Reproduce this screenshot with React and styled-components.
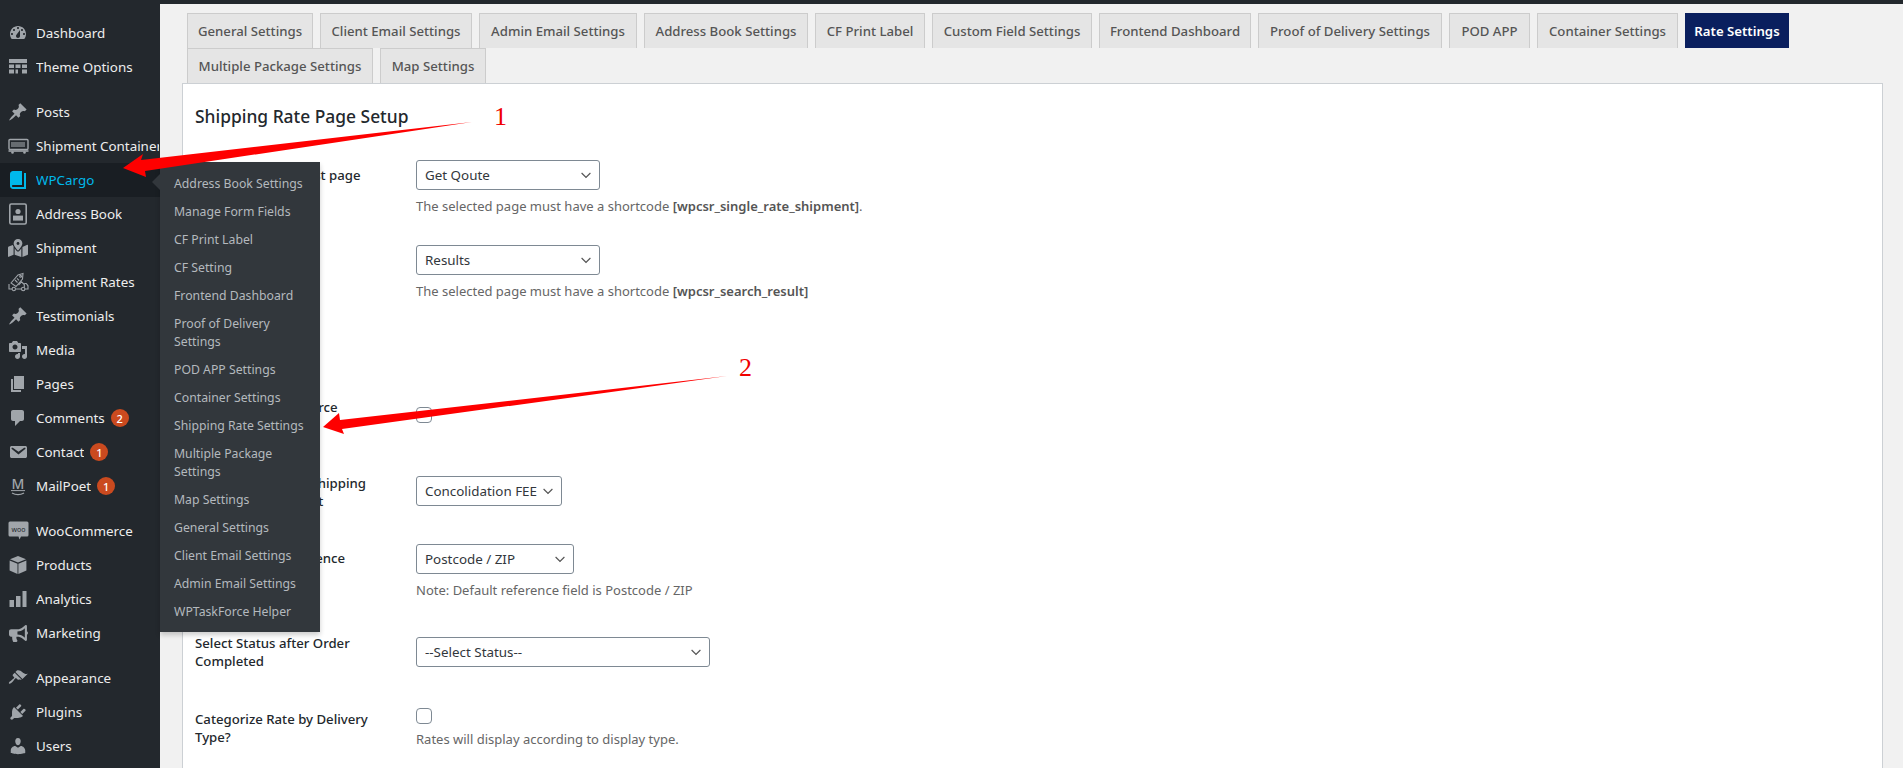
import React from 'react';
import styled, { createGlobalStyle } from 'styled-components';
import { FaMapMarkedAlt, FaBullhorn } from 'react-icons/fa';

const Global = createGlobalStyle`
  html, body { margin: 0; padding: 0; height: 768px; overflow: hidden; background: #f1f1f1; }
  body { font-family: "Noto Sans", "Open Sans", sans-serif; }
`;

const Page = styled.div`
  position: relative;
  width: 1903px;
  height: 768px;
  overflow: hidden;
  display: flex;
  flex-direction: column;
  background: #f1f1f1;
`;
const TopBar = styled.div`
  height: 4px;
  flex: none;
  background: #23282d;
`;
const Body = styled.div`
  flex: 1;
  display: flex;
  min-height: 0;
`;
const Sidebar = styled.nav`
  width: 160px;
  flex: none;
  background: #23282d;
  padding-top: 12px;
  position: relative;
  z-index: 5;
`;
const MenuGroup = styled.div`
  margin-bottom: 11px;
`;
const MenuRow = styled.div`
  position: relative;
  height: 34px;
  display: flex;
  align-items: center;
  background: ${p => (p.$active ? '#191e23' : 'transparent')};
  color: ${p => (p.$active ? '#00b9eb' : '#eeeeee')};
  font-size: 13.4px;
  white-space: nowrap;
`;
const MenuText = styled.span`
  max-width: 123px;
  overflow: hidden;
`;
const IconSlot = styled.span`
  width: 36px;
  flex: none;
  display: flex;
  justify-content: center;
  align-items: center;
  color: ${p => (p.$active ? '#00b9eb' : '#a0a5aa')};
`;
const Badge = styled.span`
  width: 18px;
  height: 18px;
  margin-left: 6px;
  border-radius: 50%;
  background: #ca4a1f;
  color: #fff;
  font-size: 11px;
  font-weight: 500;
  display: flex;
  align-items: center;
  justify-content: center;
`;
const Flyout = styled.div`
  position: absolute;
  left: 160px;
  top: -1px;
  width: 160px;
  background: #32373c;
  padding: 8px 0 6px;
  box-shadow: 0 3px 5px rgba(0, 0, 0, 0.2);
  white-space: normal;
  &::before {
    content: '';
    position: absolute;
    left: -8px;
    top: 12px;
    border: 8px solid transparent;
    border-left: none;
    border-right-color: #32373c;
  }
`;
const FlyoutItem = styled.div`
  padding: 5px 12px 5px 14px;
  font-size: 12.25px;
  line-height: 18px;
  color: #b4b9be;
`;

const Content = styled.main`
  flex: 1;
  min-width: 0;
  padding: 9px 20px 0 22px;
`;
const TabBar = styled.div`
  display: flex;
  flex-wrap: wrap;
  padding-left: 5px;
  column-gap: 7px;
`;
const Tab = styled.div`
  box-sizing: border-box;
  width: ${p => p.$w}px;
  height: 35px;
  border: 1px solid ${p => (p.$active ? '#0a1f5e' : '#cccccc')};
  border-bottom: none;
  background: ${p => (p.$active ? '#0a1f5e' : '#e5e5e5')};
  color: ${p => (p.$active ? '#ffffff' : '#555555')};
  font-size: 13.2px;
  font-weight: ${p => (p.$active ? 600 : 500)};
  line-height: 35px;
  text-align: center;
  white-space: nowrap;
`;
const Panel = styled.section`
  background: #fff;
  border: 1px solid #ccd0d4;
  padding: 20px 12px 0 12px;
  height: 700px;
`;
const Heading = styled.h2`
  margin: 0 0 25px;
  font-size: 17.4px;
  line-height: 24px;
  font-weight: 500;
  color: #23282d;
`;
const Row = styled.div`
  display: grid;
  grid-template-columns: 221px 1fr;
  height: ${p => p.$h}px;
`;
const Label = styled.div`
  padding-top: 13px;
  width: 190px;
  font-size: 13.2px;
  line-height: 18px;
  font-weight: 500;
  color: #23282d;
`;
const Control = styled.div`
  padding-top: ${p => p.$pad}px;
`;
const Select = styled.select`
  display: block;
  box-sizing: border-box;
  width: ${p => p.$w}px;
  height: 30px;
  appearance: none;
  -webkit-appearance: none;
  border: 1px solid #7e8993;
  border-radius: 3px;
  padding: 0 24px 0 8px;
  font-family: inherit;
  font-size: 13.4px;
  color: #32373c;
  background: #fff url('data:image/svg+xml;charset=US-ASCII,%3Csvg%20width%3D%2220%22%20height%3D%2220%22%20xmlns%3D%22http%3A%2F%2Fwww.w3.org%2F2000%2Fsvg%22%3E%3Cpath%20d%3D%22M5%207l5%205%205-5%201%201-6%206-6-6%201-1z%22%20fill%3D%22%23555%22%2F%3E%3C%2Fsvg%3E') no-repeat right 5px top 50%;
  background-size: 16px 16px;
`;
const Check = styled.input`
  display: block;
  box-sizing: border-box;
  width: 16px;
  height: 16px;
  margin: 0;
  appearance: none;
  -webkit-appearance: none;
  background: #fff;
  border: 1px solid #7e8993;
  border-radius: 4px;
`;
const Help = styled.p`
  margin: ${p => p.$top || 7}px 0 0;
  font-size: 13px;
  line-height: 18px;
  color: #666666;
  strong { font-weight: 600; color: #555; }
`;

const Overlay = styled.div`
  position: absolute;
  inset: 0;
  z-index: 20;
  pointer-events: none;
`;
const ArrowSvg = styled.svg`
  position: absolute;
  left: 0;
  top: 0;
  width: 1903px;
  height: 768px;
`;
const Marker = styled.span`
  position: absolute;
  left: ${p => p.$x}px;
  top: ${p => p.$y}px;
  font-family: "Liberation Serif", serif;
  font-size: 26px;
  line-height: 26px;
  color: #f00000;
`;

const Dash = ({ d }) => (
  <svg width="20" height="20" viewBox="0 0 20 20" fill="currentColor"><path d={d} /></svg>
);
const P = {
  dashboard: 'M3.76 16h12.48c1.1-1.37 1.76-3.11 1.76-5 0-4.42-3.58-8-8-8s-8 3.58-8 8c0 1.89.66 3.63 1.76 5zM10 4c.55 0 1 .45 1 1s-.45 1-1 1-1-.45-1-1 .45-1 1-1zM6 6c.55 0 1 .45 1 1s-.45 1-1 1-1-.45-1-1 .45-1 1-1zm8 0c.55 0 1 .45 1 1s-.45 1-1 1-1-.45-1-1 .45-1 1-1zm-5.37 5.55L12 7v6c0 1.1-.9 2-2 2s-2-.9-2-2c0-.57.24-1.08.63-1.45zM4 10c.55 0 1 .45 1 1s-.45 1-1 1-1-.45-1-1 .45-1 1-1zm12 0c.55 0 1 .45 1 1s-.45 1-1 1-1-.45-1-1 .45-1 1-1z',
  pin: 'M10.44 3.02l1.82-1.82 6.36 6.35-1.83 1.82c-1.05-.68-2.48-.57-3.41.36l-.75.75c-.92.93-1.04 2.35-.35 3.41l-1.83 1.82-2.41-2.41-2.8 2.79c-.42.42-3.38 2.71-3.8 2.29s1.86-3.39 2.28-3.81l2.79-2.79L4.1 9.36l1.83-1.82c1.05.69 2.48.57 3.4-.36l.75-.75c.93-.92 1.05-2.35.36-3.41z',
  media: 'M13 11V4c0-.55-.45-1-1-1h-1.67L9 1H5L3.67 3H2c-.55 0-1 .45-1 1v7c0 .55.45 1 1 1h10c.55 0 1-.45 1-1zM7 4.5c1.38 0 2.5 1.12 2.5 2.5S8.38 9.5 7 9.5 4.5 8.38 4.5 7 5.62 4.5 7 4.5zM14 6h5v10.5c0 1.38-1.12 2.5-2.5 2.5S14 17.88 14 16.5s1.12-2.5 2.5-2.5c.17 0 .34.02.5.05V9h-3V6zm-4 8.05V13h2v3.5c0 1.38-1.12 2.5-2.5 2.5S7 17.88 7 16.5 8.12 14 9.5 14c.17 0 .34.02.5.05z',
  pages: 'M6 15V2h10v13H6zm-1 1h8v2H3V5h2v11z',
  comments: 'M5 2h9c1.1 0 2 .9 2 2v7c0 1.1-.9 2-2 2h-2l-5 5v-5H5c-1.1 0-2-.9-2-2V4c0-1.1.9-2 2-2z',
  email: 'M3.87 4h13.25C18.37 4 19 4.59 19 5.79v8.42c0 1.19-.63 1.79-1.88 1.79H3.87c-1.25 0-1.88-.6-1.88-1.79V5.79c0-1.2.63-1.79 1.88-1.79zm6.62 8.6l6.74-5.53c.24-.2.43-.66.13-1.07-.29-.41-.82-.42-1.17-.17l-5.7 3.86L4.8 5.83c-.35-.25-.88-.24-1.17.17-.3.41-.11.87.13 1.07z',
  appearance: 'M14.48 11.06L7.41 3.99l1.5-1.5c.5-.56 2.3-.47 3.51.32 1.21.8 1.43 1.28 2.91 2.1 1.18.64 2.45 1.26 4.45.85zm-.71.71L6.7 4.7 4.93 6.47c-.39.39-.39 1.02 0 1.41l1.06 1.06c.39.39.39 1.03 0 1.42-.6.6-1.43 1.11-2.21 1.69-.35.26-.7.53-1.01.84C1.43 13.23.4 14.91 1 15.5c.59.6 2.27-.44 3.61-1.78.31-.31.58-.66.84-1.01.58-.78 1.09-1.61 1.69-2.21.39-.39 1.02-.39 1.41 0l1.06 1.06c.39.39 1.02.39 1.41 0z',
  plugins: 'M13.11 4.36L9.87 7.6 8 5.73l3.24-3.24c.35-.34 1.05-.2 1.56.32.52.51.66 1.21.31 1.55zm-8 1.77l.91-1.12 9.01 9.01-1.19.84c-.71.71-2.63 1.16-3.82 1.16H6.14L4.9 17.26c-.59.59-1.54.59-2.12 0-.59-.58-.59-1.53 0-2.12l1.24-1.24v-3.88c0-1.13.4-3.19 1.09-3.89zm7.26 3.97l3.24-3.24c.34-.35 1.04-.21 1.55.31.52.51.66 1.21.31 1.55l-3.24 3.25z',
  users: 'M10 9.25c-2.27 0-2.73-3.44-2.73-3.44C7 4.02 7.82 2 9.97 2c2.16 0 2.98 2.02 2.71 3.81 0 0-.41 3.44-2.68 3.44zm0 2.57L12.72 10c2.39 0 4.52 2.33 4.52 4.53v2.49s-3.65 1.13-7.24 1.13c-3.65 0-7.24-1.13-7.24-1.13v-2.49c0-2.25 1.94-4.53 4.47-4.53z',
  book: 'M16 3h2v16H5c-1.66 0-3-1.34-3-3V4c0-1.66 1.34-3 3-3h9v14H5c-.55 0-1 .45-1 1s.45 1 1 1h11V3z',
};
const Theme = () => (
  <svg width="20" height="20" viewBox="0 0 20 20" fill="currentColor">
    <rect x="1" y="2" width="18" height="4" />
    <rect x="1" y="7.5" width="5" height="3.5" />
    <rect x="7.5" y="7.5" width="5" height="3.5" />
    <rect x="14" y="7.5" width="5" height="3.5" />
    <rect x="1" y="12.5" width="5" height="4" />
    <rect x="7.5" y="12.5" width="2.5" height="4" />
    <rect x="14" y="12.5" width="5" height="4" />
  </svg>
);
const Container = () => (
  <svg width="21" height="20" viewBox="0 0 21 20" fill="none" stroke="currentColor">
    <rect x="1" y="3.5" width="19" height="10" rx="1" strokeWidth="1.4" />
    <path d="M4 6v5M6 6v5M8 6v5M10 6v5M12 6v5M14 6v5M16 6v5" strokeWidth="1.1" />
    <path d="M0.5 15h20" strokeWidth="1.6" />
    <circle cx="4.5" cy="16.5" r="1.3" fill="currentColor" stroke="none" />
    <circle cx="16.5" cy="16.5" r="1.3" fill="currentColor" stroke="none" />
  </svg>
);
const AddressBook = () => (
  <svg width="20" height="22" viewBox="0 0 20 22" fill="none">
    <rect x="1.8" y="1" width="16.4" height="20" rx="1.5" stroke="currentColor" strokeWidth="1.6" />
    <circle cx="10" cy="8.5" r="2.6" fill="currentColor" />
    <rect x="5" y="12.6" width="10" height="5" fill="currentColor" />
  </svg>
);
const Rates = () => (
  <svg width="21" height="20" viewBox="0 0 21 20" fill="none" stroke="currentColor" strokeWidth="1.1">
    <path d="M3 11l7-8 5-1.5L14.5 7l-6.5 7.5z" />
    <circle cx="12.6" cy="4.4" r="0.9" />
    <path d="M7 8l2.5 2.5M9 6.4l2 2" />
    <path d="M10.5 13l3-3.2 2.8 2.8V15" />
    <path d="M1 12v5h3M8 17h5.5M16.8 17H20v-3.2l-1.8-2.3h-2" />
    <circle cx="5.8" cy="17" r="1.7" />
    <circle cx="15.2" cy="17" r="1.7" />
  </svg>
);
const MailPoet = () => (
  <svg width="20" height="22" viewBox="0 0 20 22" fill="none">
    <text x="10" y="14" textAnchor="middle" fontFamily="Noto Sans, sans-serif" fontSize="14" fontWeight="500" fill="currentColor">M</text>
    <path d="M3 15.6h14" stroke="currentColor" strokeWidth="1" />
    <path d="M4 18c3.5 2 8.5 2 12 0" stroke="currentColor" strokeWidth="1.3" />
  </svg>
);
const Woo = () => (
  <svg width="21" height="22" viewBox="0 0 21 22">
    <path d="M2 1.5h17a1.5 1.5 0 0 1 1.5 1.5v12a1.5 1.5 0 0 1-1.5 1.5h-6l-1.5 3-1-3H2A1.5 1.5 0 0 1 .5 15V3A1.5 1.5 0 0 1 2 1.5z" fill="currentColor" />
    <text x="10.5" y="11.5" textAnchor="middle" fontFamily="Noto Sans, sans-serif" fontSize="7" fill="#23282d">woo</text>
  </svg>
);
const Products = () => (
  <svg width="20" height="20" viewBox="0 0 20 20" fill="currentColor">
    <path d="M10 1l8 3.2L10 7.6 2 4.2z" />
    <path d="M1.6 5.4l7.9 3.3V19l-7.9-3.6z" />
    <path d="M18.4 5.4l-8 3.3V19l8-3.6z" />
  </svg>
);
const Analytics = () => (
  <svg width="20" height="20" viewBox="0 0 20 20" fill="currentColor">
    <rect x="1.5" y="11" width="4.5" height="7" />
    <rect x="8" y="7" width="4.5" height="11" />
    <rect x="14.5" y="2" width="4" height="16" />
  </svg>
);

const groups = [
  [
    { label: 'Dashboard', icon: <Dash d={P.dashboard} /> },
    { label: 'Theme Options', icon: <Theme /> },
  ],
  [
    { label: 'Posts', icon: <Dash d={P.pin} /> },
    { label: 'Shipment Container', icon: <Container /> },
    { label: 'WPCargo', icon: <Dash d={P.book} />, active: true },
    { label: 'Address Book', icon: <AddressBook /> },
    { label: 'Shipment', icon: <FaMapMarkedAlt size={20} /> },
    { label: 'Shipment Rates', icon: <Rates /> },
    { label: 'Testimonials', icon: <Dash d={P.pin} /> },
    { label: 'Media', icon: <Dash d={P.media} /> },
    { label: 'Pages', icon: <Dash d={P.pages} /> },
    { label: 'Comments', icon: <Dash d={P.comments} />, badge: 2 },
    { label: 'Contact', icon: <Dash d={P.email} />, badge: 1 },
    { label: 'MailPoet', icon: <MailPoet />, badge: 1 },
  ],
  [
    { label: 'WooCommerce', icon: <Woo /> },
    { label: 'Products', icon: <Products /> },
    { label: 'Analytics', icon: <Analytics /> },
    { label: 'Marketing', icon: <FaBullhorn size={19} /> },
  ],
  [
    { label: 'Appearance', icon: <Dash d={P.appearance} /> },
    { label: 'Plugins', icon: <Dash d={P.plugins} /> },
    { label: 'Users', icon: <Dash d={P.users} /> },
  ],
];

const flyout = [
  'Address Book Settings', 'Manage Form Fields', 'CF Print Label', 'CF Setting', 'Frontend Dashboard',
  'Proof of Delivery Settings', 'POD APP Settings', 'Container Settings', 'Shipping Rate Settings',
  'Multiple Package Settings', 'Map Settings', 'General Settings', 'Client Email Settings',
  'Admin Email Settings', 'WPTaskForce Helper',
];

const tabs = [
  { t: 'General Settings', w: 126 }, { t: 'Client Email Settings', w: 152 }, { t: 'Admin Email Settings', w: 158 },
  { t: 'Address Book Settings', w: 164 }, { t: 'CF Print Label', w: 110 }, { t: 'Custom Field Settings', w: 160 },
  { t: 'Frontend Dashboard', w: 152 }, { t: 'Proof of Delivery Settings', w: 184 }, { t: 'POD APP', w: 81 },
  { t: 'Container Settings', w: 141 }, { t: 'Rate Settings', w: 104, active: true },
  { t: 'Multiple Package Settings', w: 186 }, { t: 'Map Settings', w: 106 },
];

const Opt = ({ w, children }) => (
  <Select $w={w} defaultValue={children}><option>{children}</option></Select>
);

export default function App() {
  return (
    <Page>
      <Global />
      <TopBar />
      <Body>
        <Sidebar>
          {groups.map((g, i) => (
            <MenuGroup key={i}>
              {g.map(item => (
                <MenuRow key={item.label} $active={item.active}>
                  <IconSlot $active={item.active}>{item.icon}</IconSlot>
                  <MenuText>{item.label}</MenuText>
                  {item.badge && <Badge>{item.badge}</Badge>}
                  {item.active && (
                    <Flyout>
                      {flyout.map(f => <FlyoutItem key={f}>{f}</FlyoutItem>)}
                    </Flyout>
                  )}
                </MenuRow>
              ))}
            </MenuGroup>
          ))}
        </Sidebar>
        <Content>
          <TabBar>
            {tabs.map(t => <Tab key={t.t} $w={t.w} $active={t.active}>{t.t}</Tab>)}
          </TabBar>
          <Panel>
            <Heading>Shipping Rate Page Setup</Heading>
            <Row $h={85}>
              <Label>Select Rates Request page</Label>
              <Control $pad={7}>
                <Opt w={184}>Get Qoute</Opt>
                <Help>The selected page must have a shortcode <strong>[wpcsr_single_rate_shipment]</strong>.</Help>
              </Control>
            </Row>
            <Row $h={147}>
              <Label>Select Result page</Label>
              <Control $pad={7}>
                <Opt w={184}>Results</Opt>
                <Help>The selected page must have a shortcode <strong>[wpcsr_search_result]</strong></Help>
              </Control>
            </Row>
            <Row $h={76}>
              <Label>Enable WooCommerce Shipping Rate?</Label>
              <Control $pad={22}><Check type="checkbox" /></Control>
            </Row>
            <Row $h={75}>
              <Label>Select Product for Shipping Consolidation Credit</Label>
              <Control $pad={15}><Opt w={146}>Concolidation FEE</Opt></Control>
            </Row>
            <Row $h={85}>
              <Label>Select Search Reference</Label>
              <Control $pad={8}>
                <Opt w={158}>Postcode / ZIP</Opt>
                <Help>Note: Default reference field is Postcode / ZIP</Help>
              </Control>
            </Row>
            <Row $h={76}>
              <Label>Select Status after Order Completed</Label>
              <Control $pad={16}><Opt w={294}>--Select Status--</Opt></Control>
            </Row>
            <Row $h={76}>
              <Label>Categorize Rate by Delivery Type?</Label>
              <Control $pad={11}>
                <Check type="checkbox" />
                <Help $top={6}>Rates will display according to display type.</Help>
              </Control>
            </Row>
          </Panel>
        </Content>
      </Body>
      <Overlay>
        <ArrowSvg viewBox="0 0 1903 768">
          <polygon points="123,168 143,154 141,160 472,122 145,171 146,177" fill="#fe0000" />
          <polygon points="323,427 339,413 340,420 727,376 342,429 344,434" fill="#fe0000" />
        </ArrowSvg>
        <Marker $x={494} $y={104}>1</Marker>
        <Marker $x={739} $y={355}>2</Marker>
      </Overlay>
    </Page>
  );
}
